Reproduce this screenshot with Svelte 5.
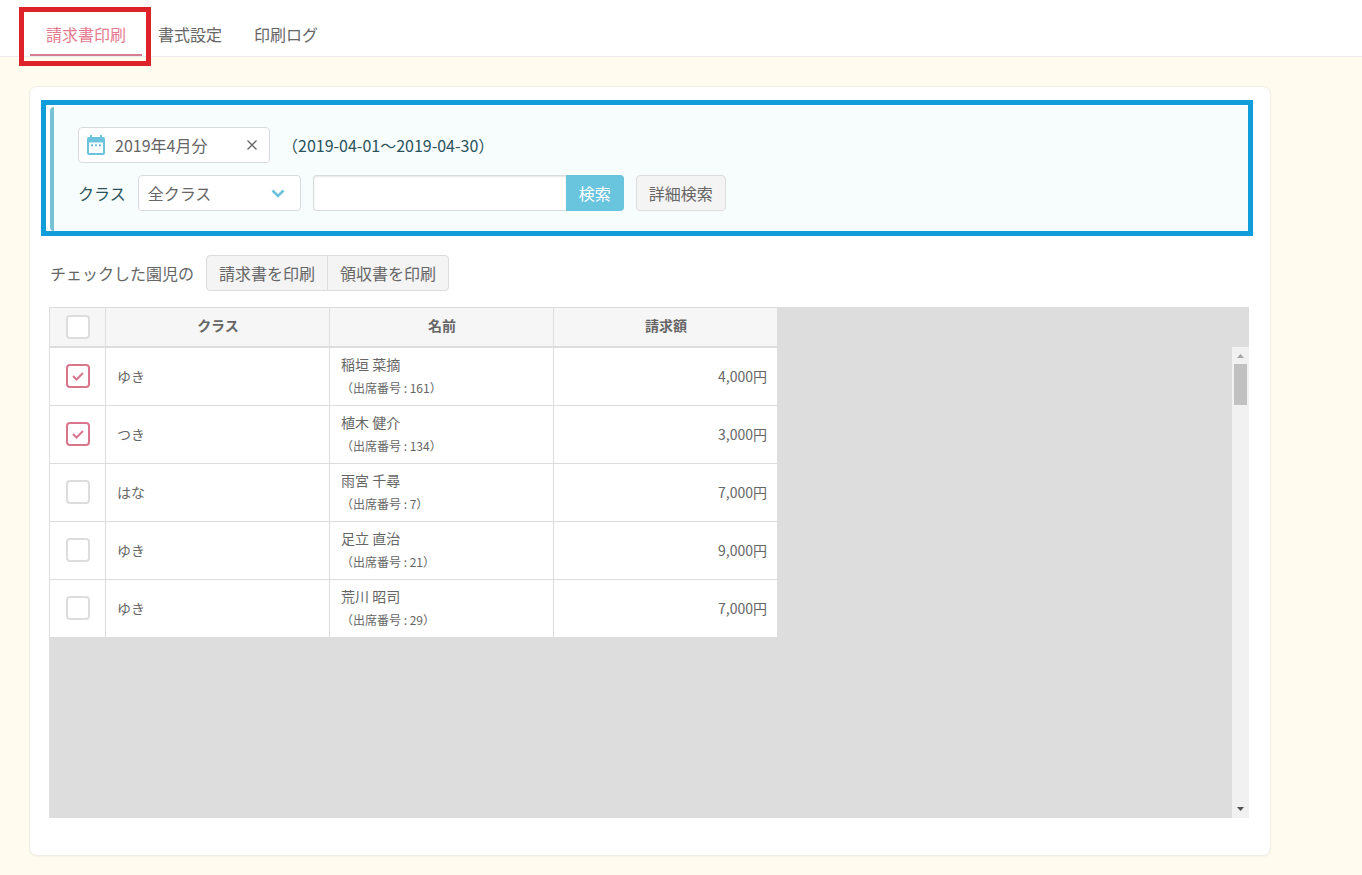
<script>
  const tabs = ['請求書印刷', '書式設定', '印刷ログ'];
  let active = $state('請求書印刷');
  let month = $state('2019年4月分');
  let rows = $state([
    { group: 'ゆき', name: '稲垣 菜摘', no: 161, amount: 4000, checked: true },
    { group: 'つき', name: '植木 健介', no: 134, amount: 3000, checked: true },
    { group: 'はな', name: '雨宮 千尋', no: 7, amount: 7000, checked: false },
    { group: 'ゆき', name: '足立 直治', no: 21, amount: 9000, checked: false },
    { group: 'ゆき', name: '荒川 昭司', no: 29, amount: 7000, checked: false }
  ]);
  function toggleAll(e) {
    for (const row of rows) row.checked = e.currentTarget.checked;
  }
</script>

<div class="page">
  <nav class="tabs">
    {#each tabs as tab}
      <a href="#top" class="tab" class:active={tab === active} onclick={() => (active = tab)}>{tab}</a>
    {/each}
    <div class="marker"></div>
  </nav>

  <main>
    <section class="card">
      <div class="frame">
        <form class="search" onsubmit={(e) => e.preventDefault()}>
          <div class="line">
            <div class="month">
              <svg width="18" height="20" viewBox="0 0 18 20" aria-hidden="true">
                <path fill="#6bc3dc" fill-rule="evenodd" d="M3 0h2v2h8V0h2v2h1a2 2 0 0 1 2 2v14a2 2 0 0 1-2 2H2a2 2 0 0 1-2-2V4a2 2 0 0 1 2-2h1zM2 7.500v10.500h14V7.500z" />
                <path fill="#6bc3dc" d="M4 9.200h2v2H4zM8 9.200h2v2H8zM12 9.200h2v2h-2z" />
              </svg>
              <input type="text" aria-label="請求月" bind:value={month} />
              <button type="button" aria-label="クリア" onclick={() => (month = '')}>
                <svg width="10" height="10" viewBox="0 0 10 10"><path d="M.5.5l9 9M9.500.5l-9 9" stroke="#666" stroke-width="1.300" /></svg>
              </button>
            </div>
            <span>（2019-04-01～2019-04-30）</span>
          </div>
          <div class="line">
            <label for="class-select">クラス</label>
            <div class="select">
              <select id="class-select"><option>全クラス</option></select>
              <svg width="14" height="9" viewBox="0 0 14 9" aria-hidden="true"><path d="M1.500 1.500L7 7l5.500-5.500" fill="none" stroke="#6bc3dc" stroke-width="2.600" /></svg>
            </div>
            <div class="keyword">
              <input type="text" aria-label="検索キーワード" />
              <button type="submit">検索</button>
            </div>
            <button type="button" class="btn">詳細検索</button>
          </div>
        </form>
      </div>

      <div class="actions">
        <span>チェックした園児の</span>
        <div class="group">
          <button type="button" class="btn">請求書を印刷</button>
          <button type="button" class="btn">領収書を印刷</button>
        </div>
      </div>

      <div class="grid">
        <table>
          <thead>
            <tr>
              <th class="pick"><input type="checkbox" aria-label="すべて選択" onchange={toggleAll} /></th>
              <th>クラス</th>
              <th>名前</th>
              <th>請求額</th>
            </tr>
          </thead>
          <tbody>
            {#each rows as row}
              <tr>
                <td class="pick">
                  <label class="check">
                    <input type="checkbox" aria-label={row.name} bind:checked={row.checked} />
                    {#if row.checked}
                      <svg width="24" height="24" viewBox="0 0 24 24" aria-hidden="true"><path d="M7 12l3.500 3.500L17 9" fill="none" stroke="#d9758d" stroke-width="2" /></svg>
                    {/if}
                  </label>
                </td>
                <td>{row.group}</td>
                <td>
                  <div class="name">{row.name}</div>
                  <div class="no">（出席番号 : {row.no}）</div>
                </td>
                <td class="amount">{row.amount.toLocaleString('en-US')}円</td>
              </tr>
            {/each}
          </tbody>
        </table>
        <div class="scrollbar" aria-hidden="true">
          <svg width="7" height="4" viewBox="0 0 7 4"><path d="M0 4L3.500 0 7 4z" fill="#a3a3a3" /></svg>
          <div class="track"><div class="thumb"></div></div>
          <svg width="7" height="4" viewBox="0 0 7 4"><path d="M0 0h7L3.500 4z" fill="#505050" /></svg>
        </div>
      </div>
    </section>
  </main>
</div>

<style>
  :global(body) {
    background: #fffbef;
  }
  .page {
    display: flex;
    flex-direction: column;
    box-sizing: border-box;
    min-height: 100vh;
    color: #666;
    font: 16px/24px 'Noto Sans CJK JP', sans-serif;
  }
  .page * {
    box-sizing: border-box;
  }
  input,
  select,
  button {
    margin: 0;
    font: inherit;
    color: inherit;
  }
  .tabs {
    position: relative;
    display: flex;
    height: 57px;
    padding-left: 30px;
    background: #fff;
    border-bottom: 1px solid #ececec;
  }
  .tab {
    height: 56px;
    padding: 22px 16px 0;
    line-height: 24px;
    border-bottom: 2px solid transparent;
    color: #666;
    text-decoration: none;
  }
  .tab.active {
    color: #e87a8f;
    border-bottom-color: #d67f92;
  }
  .marker {
    position: absolute;
    left: 19px;
    top: 7px;
    width: 132px;
    height: 59px;
    border: 5px solid #de2229;
    pointer-events: none;
  }
  main {
    display: flex;
    flex: 1;
    padding: 29px 91px 19px 29px;
  }
  .card {
    display: flex;
    flex: 1;
    flex-direction: column;
    padding: 13px 17px 37px 11px;
    background: #fff;
    border: 1px solid #f1eee6;
    border-radius: 8px;
    box-shadow: 0 1px 2px rgba(0, 0, 0, 0.04);
  }
  .frame {
    padding: 2px 0 0 4px;
    border: 5px solid #119dd9;
  }
  .search {
    display: flex;
    flex-direction: column;
    gap: 12px;
    padding: 20px 24px;
    color: #2b535c;
    background: #f7fdfd;
    border-left: 4px solid #76c2d4;
    border-radius: 4px 0 0 4px;
  }
  .line,
  .actions {
    display: flex;
    align-items: center;
    gap: 12px;
  }
  .month {
    display: flex;
    align-items: center;
    width: 192px;
    height: 36px;
    padding: 0 12px 0 8px;
    background: #fff;
    border: 1px solid #d8dbdc;
    border-radius: 4px;
    color: #666;
  }
  .month input {
    flex: 1;
    min-width: 0;
    height: 24px;
    padding: 0 0 0 10px;
    border: 0;
    background: none;
    outline: none;
  }
  .month button {
    display: flex;
    padding: 0;
    border: 0;
    background: none;
  }
  .select {
    display: grid;
    align-items: center;
    width: 163px;
    color: #666;
  }
  .select > * {
    grid-area: 1 / 1;
  }
  .select svg {
    justify-self: end;
    margin-right: 16px;
    pointer-events: none;
  }
  .select select {
    appearance: none;
    width: 100%;
    height: 36px;
    padding: 0 9px;
    background: #fff;
    border: 1px solid #d8dbdc;
    border-radius: 4px;
  }
  .keyword {
    display: flex;
    width: 311px;
    height: 36px;
  }
  .keyword input {
    flex: 1;
    min-width: 0;
    border: 1px solid #d8dbdc;
    border-right: 0;
    border-radius: 4px 0 0 4px;
    box-shadow: inset 0 1px 2px rgba(0, 0, 0, 0.1);
  }
  .keyword button {
    padding: 0 13px;
    color: #fff;
    background: #69c4de;
    border: 0;
    border-radius: 0 4px 4px 0;
  }
  .btn {
    height: 36px;
    padding: 0 12px;
    color: #666;
    background: #f4f4f4;
    border: 1px solid #dcdcdc;
    border-radius: 4px;
  }
  .actions {
    padding: 19px 0 16px 9px;
  }
  .group {
    display: flex;
  }
  .group .btn:first-child {
    border-radius: 4px 0 0 4px;
  }
  .group .btn:last-child {
    margin-left: -1px;
    border-radius: 0 4px 4px 0;
  }
  .grid {
    display: flex;
    flex: 1;
    align-items: flex-start;
    justify-content: space-between;
    margin: 0 4px 0 8px;
    background: #ddd;
  }
  table {
    width: 728px;
    table-layout: fixed;
    border-collapse: separate;
    border-spacing: 0;
    font-size: 14px;
    line-height: 20px;
  }
  th,
  td {
    padding: 0 10px 2px 11px;
    border: 0 solid #ddd;
    border-width: 1px 0 0 1px;
    text-align: left;
    background: #fff;
  }
  th {
    height: 40px;
    padding-bottom: 4px;
    border-bottom-width: 1px;
    text-align: center;
    background: #f6f6f6;
  }
  td {
    height: 58px;
  }
  .pick {
    width: 56px;
    padding-left: 16px;
    padding-right: 15px;
  }
  th.pick {
    padding-bottom: 0;
  }
  .check {
    display: grid;
  }
  .check > * {
    grid-area: 1 / 1;
  }
  .check svg {
    pointer-events: none;
  }
  input[type='checkbox'] {
    display: block;
    appearance: none;
    width: 24px;
    height: 24px;
    background: #fff;
    border: 2px solid #ddd;
    border-radius: 4px;
  }
  input[type='checkbox']:checked {
    border-color: #d9758d;
  }
  .name {
    line-height: 24px;
  }
  .no {
    font-size: 12px;
    line-height: 24px;
  }
  td.amount {
    text-align: right;
  }
  .scrollbar {
    display: flex;
    flex-direction: column;
    align-items: center;
    align-self: stretch;
    width: 17px;
    margin-top: 40px;
    padding: 7px 2px;
    background: #f1f1f1;
  }
  .track {
    flex: 1;
    align-self: stretch;
    padding: 6px 0;
  }
  .thumb {
    height: 41px;
    background: #c1c1c1;
  }
</style>
